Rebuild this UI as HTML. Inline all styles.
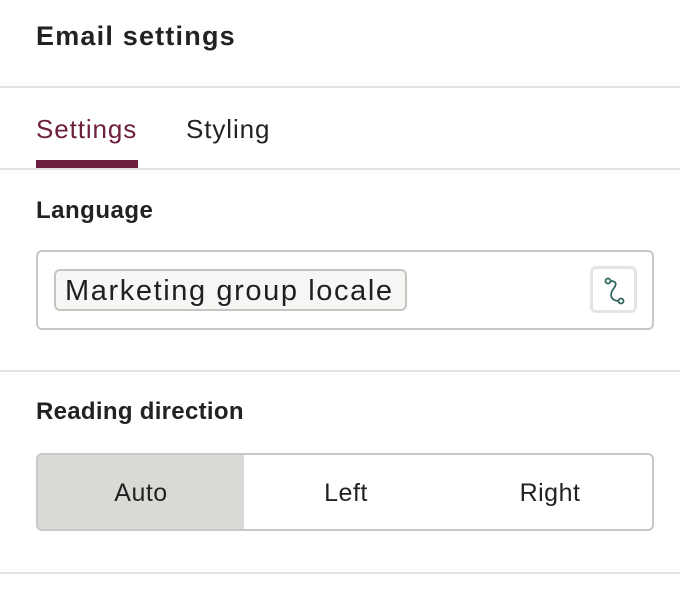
<!DOCTYPE html><html><head><style>
body{margin:0;width:680px;height:594px;background:#fff;font-family:"Liberation Sans",sans-serif;color:#222;position:relative;overflow:hidden}
.a{position:absolute}
.hr{position:absolute;left:0;width:680px;height:2px;background:#e3e3e3}
</style></head><body>
<div class="a" style="left:36px;top:21px;font-size:27px;font-weight:bold;color:#222;letter-spacing:1.2px">Email settings</div>
<div class="hr" style="top:86px"></div>
<div class="a" style="left:36px;top:114px;font-size:26px;color:#6e1f3f;letter-spacing:0.9px">Settings</div>
<div class="a" style="left:186px;top:114px;font-size:26px;color:#222;letter-spacing:0.9px">Styling</div>
<div class="a" style="left:36px;top:160px;width:102px;height:8px;background:#6e1f3f"></div>
<div class="hr" style="top:168px"></div>
<div class="a" style="left:36px;top:197px;font-size:24px;font-weight:bold;letter-spacing:0.5px">Language</div>
<div class="a" style="left:36px;top:250px;width:614px;height:76px;border:2px solid #c8c8c4;border-radius:6px"></div>
<div class="a" style="left:54px;top:269px;height:38px;border:2px solid #c5c5c1;border-radius:6px;background:#f6f6f4;font-size:29px;line-height:40px;padding-left:9px;width:340px;color:#1f1f1f;letter-spacing:1.6px;white-space:nowrap">Marketing group locale</div>
<div class="a" style="left:590px;top:266px;width:41px;height:41px;border:3px solid #e1e6e4;border-radius:6px"></div>
<svg class="a" style="left:590px;top:266px" width="47" height="47" viewBox="590 266 47 47"><g fill="none" stroke="#2f6660" stroke-width="1.8"><circle cx="608" cy="281" r="2.5"/><circle cx="621" cy="301" r="2.5"/><path d="M610.5 281 C616 281 617 284 614 288 C610 293 609 300 618.5 301"/></g></svg>
<div class="hr" style="top:370px"></div>
<div class="a" style="left:36px;top:398px;font-size:24px;font-weight:bold;letter-spacing:0.3px">Reading direction</div>
<div class="a" style="left:36px;top:453px;width:614px;height:74px;border:2px solid #c8c8c4;border-radius:6px;overflow:hidden;display:flex;font-size:25px;letter-spacing:0.5px">
<div style="width:206px;background:#d9d9d5;text-align:center;line-height:76px">Auto</div>
<div style="width:204px;text-align:center;line-height:76px">Left</div>
<div style="width:204px;text-align:center;line-height:76px">Right</div>
</div>
<div class="hr" style="top:572px"></div>
</body></html>
